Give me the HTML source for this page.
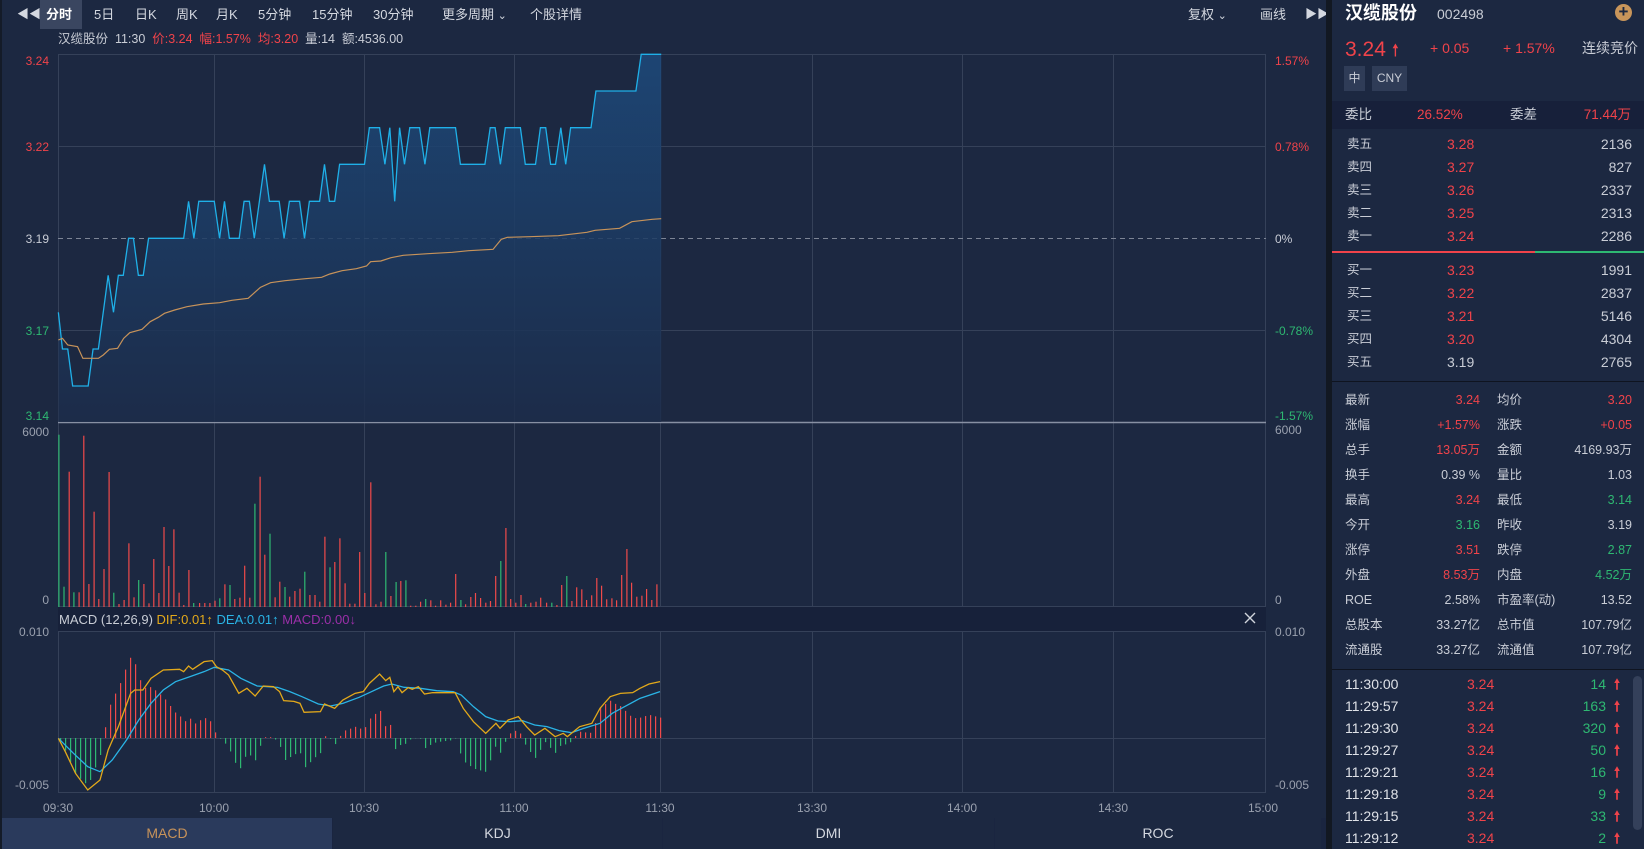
<!DOCTYPE html>
<html><head><meta charset="utf-8">
<style>
*{margin:0;padding:0;box-sizing:border-box}
body{width:1644px;height:849px;background:#1c2841;font-family:"Liberation Sans","Noto Sans CJK SC",sans-serif;color:#c9cdd6;position:relative;overflow:hidden}
.a{position:absolute;white-space:nowrap;line-height:1.2}
.r{color:#f0434a}.g{color:#2eb872}
.tb span{position:absolute;top:6px;font-size:13px;color:#d4d8e0;line-height:17px}
.row{position:absolute;left:1332px;width:312px;height:22px;font-size:12.5px}
.row span{position:absolute;top:3px;line-height:16px;height:16px}
</style></head><body>
<div class="tb">
<span style="left:17px;top:6px;font-size:12px">&#9664;&#9664;</span>
<div class="a" style="left:40px;top:0;width:42px;height:29px;background:#3a4660"></div>
<span style="left:46px;font-weight:bold;color:#fff">分时</span>
<span style="left:94px">5日</span>
<span style="left:135px">日K</span>
<span style="left:176px">周K</span>
<span style="left:216px">月K</span>
<span style="left:258px">5分钟</span>
<span style="left:312px">15分钟</span>
<span style="left:373px">30分钟</span>
<span style="left:442px">更多周期 <small>&#8964;</small></span>
<span style="left:530px">个股详情</span>
<span style="left:1188px">复权 <small>&#8964;</small></span>
<span style="left:1260px">画线</span>
<span style="left:1305px;font-size:12px">&#9654;&#9654;</span>
</div>
<div class="a" style="left:58px;top:32px;font-size:12.5px">汉缆股份&nbsp;&nbsp;11:30&nbsp;&nbsp;<span class="r">价:3.24&nbsp;&nbsp;幅:1.57%&nbsp;&nbsp;均:3.20</span>&nbsp;&nbsp;量:14&nbsp;&nbsp;额:4536.00</div>

<svg class="a" style="left:0;top:0" width="1326" height="849" id="ch">
<defs><linearGradient id="fg" x1="0" y1="0" x2="0" y2="1"><stop offset="0" stop-color="#1d4a7c"/><stop offset="1" stop-color="#1c2c4a"/></linearGradient></defs>
<g stroke="#354159" stroke-width="1" fill="none">
<rect x="58.5" y="54.5" width="1207" height="552"/>
<line x1="58" y1="146.5" x2="1266" y2="146.5"/>
<line x1="58" y1="330.5" x2="1266" y2="330.5"/>
<line x1="58" y1="606.5" x2="1266" y2="606.5"/>
<rect x="58.5" y="631.5" width="1207" height="161"/>
<line x1="214.5" y1="54" x2="214.5" y2="792"/><line x1="364.5" y1="54" x2="364.5" y2="792"/>
<line x1="514.5" y1="54" x2="514.5" y2="792"/><line x1="660.5" y1="54" x2="660.5" y2="792"/>
<line x1="812.5" y1="54" x2="812.5" y2="792"/><line x1="962.5" y1="54" x2="962.5" y2="792"/>
<line x1="1113.5" y1="54" x2="1113.5" y2="792"/>
</g>
<line x1="58" y1="422.5" x2="1266" y2="422.5" stroke="#8790a3" stroke-width="1.5"/>
<line x1="58" y1="238.5" x2="1266" y2="238.5" stroke="#7d8596" stroke-dasharray="5,4"/>
<line x1="58" y1="738.5" x2="1266" y2="738.5" stroke="#354159"/>
<rect x="58" y="607" width="1208" height="24" fill="#17213a"/>
<g id="vol"></g>
<g id="hist"></g>
<g transform="translate(40,40) scale(0.408163,0.333333)">
<path id="pf" fill="url(#fg)" opacity="0.85"/>
<polyline id="pl" fill="none" stroke="#1fb0e8" stroke-width="1.3" vector-effect="non-scaling-stroke"/>
<polyline id="al" fill="none" stroke="#c7935a" stroke-width="1.2" vector-effect="non-scaling-stroke"/>
</g>
<g transform="translate(0,560) scale(0.408163,0.333333)">
<polyline id="dea" fill="none" stroke="#2ab4e6" stroke-width="1.3" vector-effect="non-scaling-stroke"/>
<polyline id="dif" fill="none" stroke="#e3a91a" stroke-width="1.3" vector-effect="non-scaling-stroke"/>
</g>
<g font-size="12" font-family="Liberation Sans,sans-serif">
<text x="49" y="65" text-anchor="end" fill="#f0434a">3.24</text>
<text x="49" y="151" text-anchor="end" fill="#f0434a">3.22</text>
<text x="49" y="243" text-anchor="end" fill="#c9cdd6">3.19</text>
<text x="49" y="335" text-anchor="end" fill="#2eb872">3.17</text>
<text x="49" y="420" text-anchor="end" fill="#2eb872">3.14</text>
<text x="49" y="436" text-anchor="end" fill="#9aa1af">6000</text>
<text x="49" y="604" text-anchor="end" fill="#9aa1af">0</text>
<text x="49" y="636" text-anchor="end" fill="#9aa1af">0.010</text>
<text x="49" y="789" text-anchor="end" fill="#9aa1af">-0.005</text>
<text x="1275" y="65" fill="#f0434a">1.57%</text>
<text x="1275" y="151" fill="#f0434a">0.78%</text>
<text x="1275" y="243" fill="#c9cdd6">0%</text>
<text x="1275" y="335" fill="#2eb872">-0.78%</text>
<text x="1275" y="420" fill="#2eb872">-1.57%</text>
<text x="1275" y="434" fill="#9aa1af">6000</text>
<text x="1275" y="604" fill="#9aa1af">0</text>
<text x="1275" y="636" fill="#9aa1af">0.010</text>
<text x="1275" y="789" fill="#9aa1af">-0.005</text>
<g fill="#9aa1af" text-anchor="middle"><text x="58" y="812">09:30</text><text x="214" y="812">10:00</text><text x="364" y="812">10:30</text><text x="514" y="812">11:00</text><text x="660" y="812">11:30</text><text x="812" y="812">13:30</text><text x="962" y="812">14:00</text><text x="1113" y="812">14:30</text><text x="1263" y="812">15:00</text></g>
<text x="59" y="624" font-size="13"><tspan fill="#c9cdd6">MACD (12,26,9) </tspan><tspan fill="#e3a91a">DIF:0.01↑</tspan><tspan fill="#2ab4e6"> DEA:0.01↑</tspan><tspan fill="#9b2fa8"> MACD:0.00↓</tspan></text>
</g>
<path d="M1245 613 l10 10 M1255 613 l-10 10" stroke="#d0d4dc" stroke-width="1.4"/>
</svg>
<div class="a" style="left:0;top:818px;width:1326px;height:31px;background:#1a2540"></div>
<div class="a" style="left:2px;top:818px;width:330px;height:31px;background:#2a3a5c;color:#c8935a;font-size:14px;text-align:center;line-height:31px">MACD</div>
<div class="a" style="left:333px;top:818px;width:329px;height:31px;background:#1c2841;font-size:14px;text-align:center;line-height:31px;color:#d4d8e0">KDJ</div>
<div class="a" style="left:663px;top:818px;width:331px;height:31px;background:#1c2841;font-size:14px;text-align:center;line-height:31px;color:#d4d8e0">DMI</div>
<div class="a" style="left:995px;top:818px;width:326px;height:31px;background:#1c2841;font-size:14px;text-align:center;line-height:31px;color:#d4d8e0">ROC</div>
<div class="a" style="left:0;top:0;width:2px;height:849px;background:#141b28"></div>
<div class="a" style="left:1326px;top:0;width:6px;height:849px;background:#121822"></div>
<div class="a" style="left:1345px;top:3px;font-size:18px;font-weight:bold;color:#fff">汉缆股份</div>
<div class="a" style="left:1437px;top:6px;font-size:14px">002498</div>
<div class="a" style="left:1615px;top:4px;width:17px;height:17px;border-radius:50%;background:#c8955a;color:#1c2841;font-size:17px;line-height:16px;text-align:center;font-weight:bold">+</div>
<div class="a r" style="left:1345px;top:37px;font-size:21px">3.24 <span style="font-size:17px">&#129045;</span></div>
<div class="a r" style="left:1430px;top:40px;font-size:14px">+ 0.05</div>
<div class="a r" style="left:1503px;top:40px;font-size:14px">+ 1.57%</div>
<div class="a" style="left:1582px;top:40px;font-size:14px">连续竞价</div>
<div class="a" style="left:1344px;top:66px;width:21px;height:25px;background:#2f3c57;font-size:12px;text-align:center;line-height:25px">中</div>
<div class="a" style="left:1372px;top:66px;width:35px;height:25px;background:#2f3c57;font-size:12px;text-align:center;line-height:25px">CNY</div>
<div class="a" style="left:1332px;top:101px;width:312px;height:28px;background:#17203a"></div>
<div class="a" style="left:1345px;top:106px;font-size:13.5px;line-height:17px">委比</div>
<div class="a r" style="left:1417px;top:106px;font-size:13.5px;line-height:17px">26.52%</div>
<div class="a" style="left:1510px;top:106px;font-size:13.5px;line-height:17px">委差</div>
<div class="a r" style="right:13px;top:106px;font-size:13.5px;line-height:17px">71.44万</div>
<div id="ob"></div>
<div class="a" style="left:1332px;top:251px;width:203px;height:2px;background:#f0434a"></div>
<div class="a" style="left:1535px;top:251px;width:109px;height:2px;background:#2eb872"></div>
<div class="a" style="left:1332px;top:381px;width:312px;height:1px;background:#0f1420"></div>
<div class="a" style="left:1332px;top:669px;width:312px;height:1px;background:#0f1420"></div>
<div id="st"></div>
<div id="tr"></div>
<div class="a" style="left:1633px;top:676px;width:9px;height:154px;border-radius:5px;background:#34405a"></div>
<script>
function pts(a){var s=[];for(var i=0;i<a.length;i+=2)s.push(a[i]+','+a[i+1]);return s.join(' ');}
var P=[45,817,55,927,68,927,80,1038,118,1038,130,927,143,927,167,706,180,817,192,706,204,706,217,595,229,595,241,706,253,706,266,595,352,595,364,484,377,595,389,484,427,484,440,595,452,484,464,595,488,595,500,484,513,484,525,595,550,373,562,484,586,484,598,595,611,484,636,484,648,595,660,484,685,484,697,373,709,484,722,484,734,373,795,373,807,263,832,263,845,373,857,263,869,484,881,263,893,373,906,263,930,263,943,373,955,263,1018,263,1030,373,1090,373,1103,263,1115,263,1128,373,1140,263,1177,263,1189,373,1214,373,1226,263,1239,263,1251,373,1263,373,1276,263,1288,373,1300,263,1350,263,1362,153,1460,153,1473,43,1522,43];
var A=[45,900,55,895,68,915,92,920,105,955,143,955,155,945,170,928,190,925,205,895,220,878,250,868,270,845,290,832,305,820,330,810,360,800,400,792,440,788,470,781,510,775,540,742,565,728,600,722,650,716,690,712,710,702,740,692,775,686,800,678,810,665,835,663,860,653,890,646,950,641,1010,637,1050,632,1110,628,1130,598,1145,592,1200,590,1270,587,1340,577,1360,571,1420,565,1450,545,1500,538,1522,536];
document.getElementById('pl').setAttribute('points',pts(P));
document.getElementById('al').setAttribute('points',pts(A));
document.getElementById('pf').setAttribute('d','M45,1146 L'+pts(P).replace(/ /g,' L')+' L1522,1146 Z');
var D=[143,535,160,575,185,640,215,690,245,660,265,570,290,500,320,400,330,390,350,390,370,355,400,330,440,328,450,335,462,318,472,328,500,305,520,302,530,320,545,330,560,345,585,400,605,385,625,408,645,378,670,380,685,395,695,422,720,424,735,430,745,457,785,455,795,432,820,445,840,420,870,400,890,395,905,370,930,342,945,362,955,352,965,395,975,380,985,398,1000,383,1010,388,1025,380,1040,402,1060,398,1115,398,1135,445,1160,485,1190,520,1215,490,1225,505,1245,480,1270,470,1290,500,1310,525,1335,505,1360,530,1380,520,1390,530,1420,500,1450,490,1470,445,1495,410,1520,400,1550,398,1568,385,1590,372,1617,365];
var E=[143,535,180,580,215,620,245,635,275,600,310,540,340,480,370,430,400,390,430,365,470,348,500,335,525,322,560,330,590,355,630,378,680,382,710,395,740,410,780,432,810,438,840,430,880,412,910,395,940,378,960,372,990,382,1030,385,1070,392,1110,395,1130,405,1160,440,1190,470,1220,483,1250,485,1280,482,1310,495,1340,500,1370,512,1400,518,1430,505,1470,490,1500,460,1530,440,1568,415,1617,395];
document.getElementById('dif').setAttribute('points',pts(D));
document.getElementById('dea').setAttribute('points',pts(E));
function itp(a,x){for(var i=0;i<a.length-2;i+=2){if(x>=a[i]&&x<=a[i+2]){var t=(x-a[i])/(a[i+2]-a[i]);return a[i+1]+t*(a[i+3]-a[i+1]);}}return a[a.length-1];}
var h='';
for(var x=60;x<=660;x+=5){var zx=x*2.45;var d=itp(E,zx)-itp(D,zx);var hh=d*0.68;var y0=738;
 if(hh>0)h+='<rect x="'+x+'" y="'+(y0-hh)+'" width="1.2" height="'+hh+'" fill="#f04a4a"/>';
 else h+='<rect x="'+x+'" y="'+y0+'" width="1.2" height="'+(-hh)+'" fill="#2eb872"/>';}
document.getElementById('hist').innerHTML=h;
var V="21:44g 34:500g 47:155r 59:517g 72:517r 84:47r 97:492r 110:275r 122:537r 135:447r 148:156r 160:518g 173:552r 186:540r 198:370r 211:532r 223:480g 236:492r 249:550r 261:417r 274:519r 287:321r 299:438r 312:328r 325:518r 337:555r 350:450r 362:549g 377:549r 390:549r 403:549r 416:542r 428:535g 441:493r 454:495g 466:537r 479:533r 491:437r 504:533r 517:251g 530:170r 542:404r 555:341g 568:532r 580:485r 593:501g 605:530r 618:513r 631:506r 643:455g 656:525r 669:525r 681:545r 694:350r 707:442g 719:426r 732:355r 745:490r 757:551r 770:551r 782:396r 795:519r 810:187r 823:553r 836:545r 848:396g 861:528r 874:486g 886:483r 899:481g 911:557r 924:557r 936:545r 949:537g 962:541r 974:557r 987:541r 1000:554r 1012:548r 1025:462r 1038:540g 1050:553r 1063:531r 1075:519r 1088:534r 1101:548r 1113:543r 1126:468r 1139:423g 1152:324r 1164:537r 1177:548r 1190:525r 1202:552g 1215:548r 1228:545r 1240:533r 1255:548r 1268:548g 1281:555r 1293:495r 1306:468g 1319:543r 1331:502r 1344:508r 1356:540r 1369:526r 1382:474r 1394:497r 1407:538r 1420:535r 1432:541r 1445:465r 1458:387r 1470:488r 1483:530r 1496:527r 1508:507r 1521:540r 1534:493r".split(' ');
h='';V.forEach(function(s){var m=s.match(/(\d+):(\d+)(\w)/);var x=50+m[1]/2.53,t=420+m[2]/3;h+='<rect x="'+x.toFixed(1)+'" y="'+t.toFixed(1)+'" width="1.2" height="'+(607-t).toFixed(1)+'" fill="'+(m[3]=='g'?'#2eb872':'#f04a4a')+'"/>';});
document.getElementById('vol').innerHTML=h;
var ob=[['卖五','3.28','2136',1],['卖四','3.27','827',1],['卖三','3.26','2337',1],['卖二','3.25','2313',1],['卖一','3.24','2286',1]];
var ys=[133,156,179,202,225];h='';
ob.forEach(function(o,i){h+='<div class="row" style="top:'+ys[i]+'px"><span style="left:15px">'+o[0]+'</span><span class="r" style="left:115px;font-size:14px">'+o[1]+'</span><span style="right:12px;font-size:14px">'+o[2]+'</span></div>';});
var ob2=[['买一','3.23','1991',1],['买二','3.22','2837',1],['买三','3.21','5146',1],['买四','3.20','4304',1],['买五','3.19','2765',0]];
ys=[259,282,305,328,351];
ob2.forEach(function(o,i){h+='<div class="row" style="top:'+ys[i]+'px"><span style="left:15px">'+o[0]+'</span><span class="'+(o[3]?'r':'')+'" style="left:115px;font-size:14px">'+o[1]+'</span><span style="right:12px;font-size:14px">'+o[2]+'</span></div>';});
document.getElementById('ob').innerHTML=h;
var st=[['最新','3.24','r','均价','3.20','r'],['涨幅','+1.57%','r','涨跌','+0.05','r'],['总手','13.05万','r','金额','4169.93万',''],['换手','0.39 %','','量比','1.03',''],['最高','3.24','r','最低','3.14','g'],['今开','3.16','g','昨收','3.19',''],['涨停','3.51','r','跌停','2.87','g'],['外盘','8.53万','r','内盘','4.52万','g'],['ROE','2.58%','','市盈率(动)','13.52',''],['总股本','33.27亿','','总市值','107.79亿',''],['流通股','33.27亿','','流通值','107.79亿','']];
h='';st.forEach(function(s,i){var t=389+i*25;h+='<div class="row" style="top:'+t+'px"><span style="left:13px">'+s[0]+'</span><span class="'+s[2]+'" style="right:164px">'+s[1]+'</span><span style="left:165px">'+s[3]+'</span><span class="'+s[5]+'" style="right:12px">'+s[4]+'</span></div>';});
document.getElementById('st').innerHTML=h;
var tr=[['11:30:00','14'],['11:29:57','163'],['11:29:30','320'],['11:29:27','50'],['11:29:21','16'],['11:29:18','9'],['11:29:15','33'],['11:29:12','2']];
h='';tr.forEach(function(s,i){var t=673+i*22;h+='<div class="row" style="top:'+t+'px;font-size:14px"><span style="left:13px;color:#dfe2e8">'+s[0]+'</span><span class="r" style="left:135px">3.24</span><span class="g" style="right:38px">'+s[1]+'</span><span class="r" style="right:24px;font-weight:bold">&#129045;</span></div>';});
document.getElementById('tr').innerHTML=h;
</script>
</body></html>
